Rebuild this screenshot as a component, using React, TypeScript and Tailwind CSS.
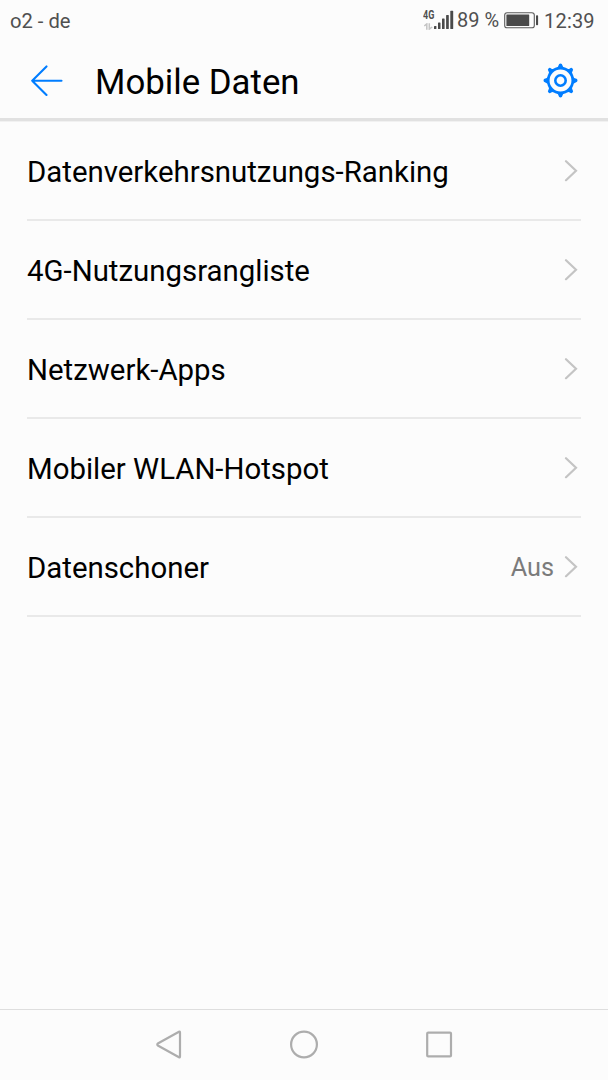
import { useState } from 'react'

type Item = {
  label: string
  value?: string
}

const items: Item[] = [
  { label: 'Datenverkehrsnutzungs-Ranking' },
  { label: '4G-Nutzungsrangliste' },
  { label: 'Netzwerk-Apps' },
  { label: 'Mobiler WLAN-Hotspot' },
  { label: 'Datenschoner', value: 'Aus' }
]

const SignalIcon = () => (
  <svg width="20" height="20" viewBox="0 0 20 20" fill="#4a4a4a">
    <rect x="0" y="16" width="2.4" height="3" rx="0.6" />
    <rect x="4" y="12.5" width="2.5" height="6.5" rx="0.6" />
    <rect x="8" y="8.5" width="2.6" height="10.5" rx="0.6" />
    <rect x="12.1" y="5" width="2.7" height="14" rx="0.6" />
    <rect x="16.3" y="0.8" width="2.9" height="18.2" rx="0.6" />
  </svg>
)

const DataArrows = () => (
  <svg width="9" height="7" viewBox="0 0 9 7" fill="none" stroke="#c4c4c4" strokeWidth="1.5">
    <path d="M0.3 3 L2.8 0.9 V6.7 M5.3 0.3 V6.1 L8.2 4" />
  </svg>
)

const BatteryIcon = () => (
  <svg width="35" height="17" viewBox="0 0 35 17" fill="none">
    <rect x="0.7" y="0.7" width="29.6" height="15.1" rx="2.4" stroke="#5a5a5a" strokeWidth="1.1" />
    <rect x="2.4" y="2.4" width="22.8" height="11.7" rx="0.5" fill="#4a4a4a" />
    <rect x="32" y="3.2" width="2.1" height="10" rx="0.8" fill="#4a4a4a" />
  </svg>
)

const StatusBar = () => (
  <div className="flex h-[42px] justify-between pl-[10px] text-[20.2px] leading-[42px] text-[#505050]">
    <span>o2 - de</span>

    <div className="flex w-[185px] items-start">
      <div className="flex w-[11px] shrink-0 flex-col pt-[9px]">
        <span className="w-[14px] origin-left scale-x-[0.75] text-[12px] font-bold leading-[12px]">
          4G
        </span>
        <div className="mt-[2px] pl-[1px]">
          <DataArrows />
        </div>
      </div>
      <div className="pt-[10px]">
        <SignalIcon />
      </div>
      <span className="ml-[3px] w-[47px] whitespace-nowrap text-[20px] leading-[40px]">89 %</span>
      <div className="pt-[12px]">
        <BatteryIcon />
      </div>
      <span className="ml-[5px] whitespace-nowrap text-[20px] tracking-[0.2px]">12:39</span>
    </div>
  </div>
)

const BackIcon = () => (
  <svg
    width="32"
    height="34"
    viewBox="0.5 -1.7 32 34"
    fill="none"
    stroke="#007dff"
    strokeWidth="2.1"
    strokeLinecap="round"
    strokeLinejoin="round"
  >
    <path d="M16 1.7 L1.7 16 L16 30.3 M1.7 16 H31" />
  </svg>
)

const teeth = [0, 45, 90, 135, 180, 225, 270, 315]

const GearIcon = () => (
  <svg width="36" height="36" viewBox="-17.5 -18.5 36 36" fill="none" stroke="#007dff">
    <circle r="12.3" strokeWidth="2.7" />
    <circle r="5.2" strokeWidth="2.6" />
    {teeth.map((angle) => (
      <path
        key={angle}
        d="M-3.8 -12.8 Q-2.2 -13.5 -1.9 -15.2 Q-1.7 -17 0 -17 Q1.7 -17 1.9 -15.2 Q2.2 -13.5 3.8 -12.8 Z"
        fill="#007dff"
        stroke="none"
        transform={`rotate(${angle})`}
      />
    ))}
  </svg>
)

const Chevron = () => (
  <svg
    width="14"
    height="22"
    viewBox="0 0.3 14 22"
    fill="none"
    stroke="#c4c4c4"
    strokeWidth="2.2"
    strokeLinecap="round"
  >
    <path d="M2 1.5 L12 11 L2 20.5" />
  </svg>
)

const Row = ({
  item,
  active,
  onSelect
}: {
  item: Item
  active: boolean
  onSelect: () => void
}) => (
  <button
    onClick={onSelect}
    aria-pressed={active}
    className="flex h-[99px] w-full items-center border-b-2 border-[#e9e9e9] pr-[3px] text-left outline-none"
  >
    <span className="flex-1 whitespace-nowrap pt-[2px] text-[29.4px] leading-[40px]">
      {item.label}
    </span>
    {item.value ? (
      <span className="mr-[10px] pt-[2px] text-[25.3px] leading-[40px] text-[#7b7b7b]">
        {item.value}
      </span>
    ) : null}
    <Chevron />
  </button>
)

const NavBar = () => (
  <nav className="flex h-[71px] items-center justify-center border-t border-[#dedede]">
    <svg
      width="304"
      height="32"
      viewBox="0 0.5 304 32"
      fill="none"
      stroke="#adadad"
      strokeWidth="2.2"
      strokeLinejoin="round"
    >
      <path d="M27 3.2 Q28 2.7 28 4 V28 Q28 29.2 27 28.7 L5.8 17 Q4.8 16 5.8 15 Z" />
      <circle cx="152" cy="16" r="12.9" />
      <rect x="275.2" y="4.1" width="23.8" height="23.8" rx="1" />
    </svg>
  </nav>
)

export default function App() {
  const [selected, setSelected] = useState('')

  return (
    <div className="flex h-[1080px] w-[608px] flex-col overflow-hidden bg-[#fcfcfc] font-['Roboto',sans-serif] text-black">
      <StatusBar />

      <header className="flex h-[79px] items-center border-b-[3px] border-[#e1e1e1] pl-[31px] pr-[29px]">
        <button aria-label="Zurück">
          <BackIcon />
        </button>
        <h1 className="ml-[32px] flex-1 pt-[4px] text-[34.8px] leading-[48px]">Mobile Daten</h1>
        <button aria-label="Einstellungen">
          <GearIcon />
        </button>
      </header>

      <main className="flex-1 border-t border-[#f1f1f1] px-[27px]">
        {items.map((item) => (
          <Row
            key={item.label}
            item={item}
            active={selected === item.label}
            onSelect={() => setSelected(item.label)}
          />
        ))}
      </main>

      <NavBar />
    </div>
  )
}
